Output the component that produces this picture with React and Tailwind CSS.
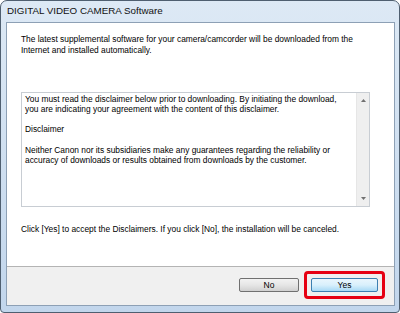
import React from 'react';

const font = { fontFamily: '"Liberation Sans", Arial, sans-serif' };

const WinButton = ({ label, primary, width }) => (
    <div
        className={
            "h-[14px] rounded-[2px] border flex items-center justify-center text-[8.5px] text-black " +
            width + " " +
            (primary
                ? "border-[#3c7fb1] bg-gradient-to-b from-[#eaf6fd] via-[#d9f0fc] to-[#a7d9f5]"
                : "border-[#707070] bg-gradient-to-b from-[#f2f2f2] via-[#e6e6e6] to-[#d0d0d0]")
        }
    >
        {label}
    </div>
);

export default function App() {
    return (
        <div className="w-[400px] h-[313px] bg-white" style={font}>
            <div className="w-full h-full rounded-t-[7px] rounded-b-[4px] border border-[#4f5f70] bg-gradient-to-b from-[#dde9f5] to-[#c2d6ec] pl-[5px] pr-[4px] pb-[6px] flex flex-col">
                {/* title bar */}
                <div className="h-[21px] flex items-center pl-[1px] text-[9.8px] text-[#111]">
                    DIGITAL VIDEO CAMERA Software
                </div>

                {/* client area */}
                <div className="flex-1 border border-[#8da0b5] bg-white flex flex-col">
                    <div className="flex-1 flex flex-col pl-[14px] pr-[24px] text-[8.4px] leading-[11px] text-black">
                        <p className="mt-[11px]">
                            The latest supplemental software for your camera/camcorder will be downloaded from the Internet and installed automatically.
                        </p>

                        {/* disclaimer box */}
                        <div className="mt-[36px] h-[115px] border border-[#c8cdd3] flex">
                            <div className="flex-1 pl-[3px] pt-[1px] pr-[8px] leading-[10.2px]">
                                <p>You must read the disclaimer below prior to downloading. By initiating the download, you are indicating your agreement with the content of this disclaimer.</p>
                                <p className="mt-[10px]">Disclaimer</p>
                                <p className="mt-[10px]">Neither Canon nor its subsidiaries make any guarantees regarding the reliability or accuracy of downloads or results obtained from downloads by the customer.</p>
                            </div>
                            <div className="w-[13px] bg-[#efefef] border-l border-[#e6e6e6] flex flex-col items-center justify-between py-[6px]">
                                <svg width="5" height="3" viewBox="0 0 5 3"><path d="M2.5 0 L5 3 L0 3 Z" fill="#707070" /></svg>
                                <svg width="5" height="3" viewBox="0 0 5 3"><path d="M0 0 L5 0 L2.5 3 Z" fill="#707070" /></svg>
                            </div>
                        </div>

                        <p className="mt-[17px]">
                            Click [Yes] to accept the Disclaimers. If you click [No], the installation will be canceled.
                        </p>
                    </div>

                    {/* footer */}
                    <div className="h-[39px] border-t border-[#b4b4b4] bg-[#f0f0f0] flex items-center justify-end gap-[12px] pr-[16px] pb-[2px]">
                        <WinButton label="No" width="w-[60px]" />
                        <div className="relative">
                            <WinButton label="Yes" width="w-[67px]" primary />
                            <div className="absolute -inset-[7px] border-[3px] border-[#e60012] rounded-[4px]" />
                        </div>
                    </div>
                </div>
            </div>
        </div>
    );
}
